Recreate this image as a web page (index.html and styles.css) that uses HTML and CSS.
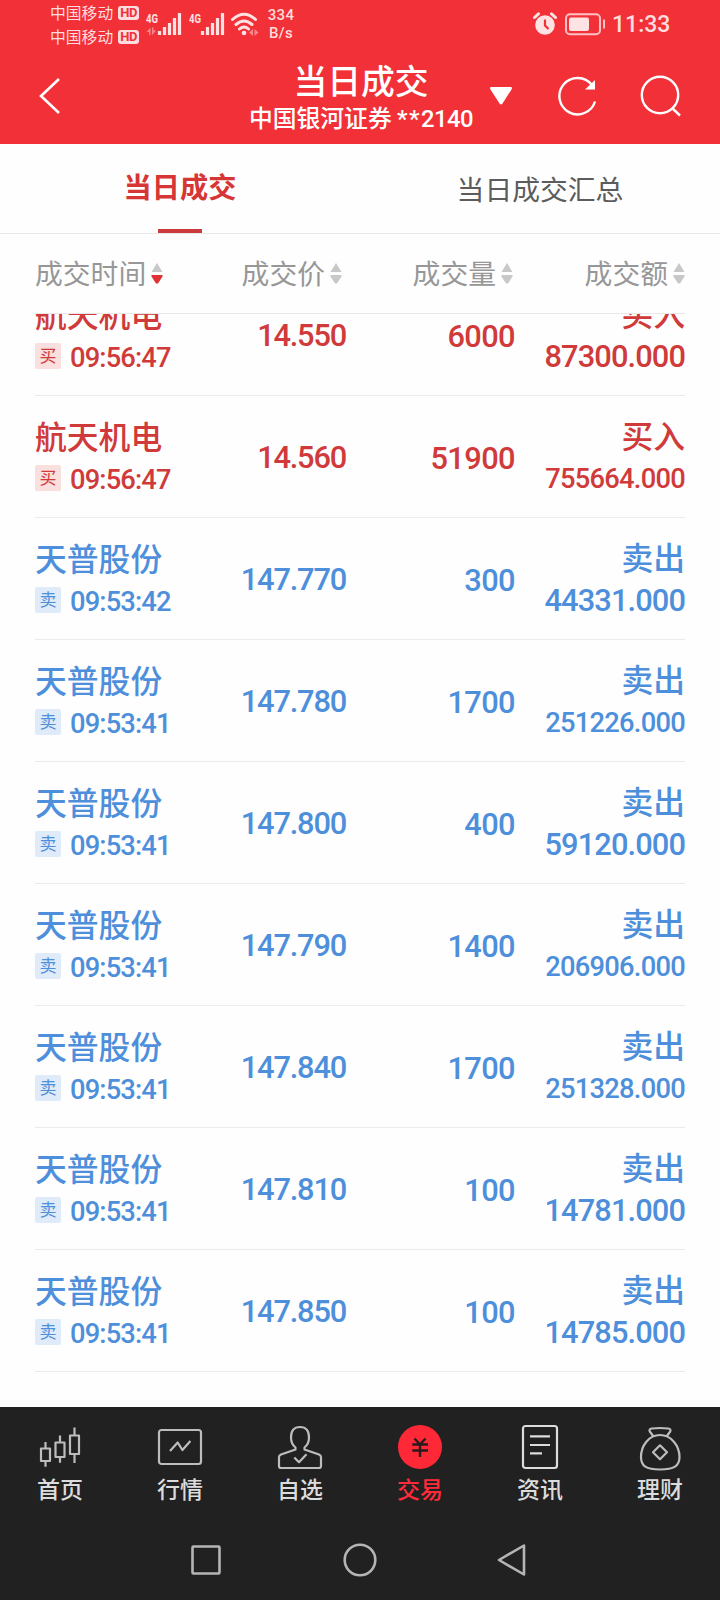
FILE: index.html
```html
<!DOCTYPE html>
<html lang="zh-CN">
<head>
    <meta charset="UTF-8">
    <meta name="viewport" content="width=device-width, initial-scale=1.0">
    <title>当日成交</title>
    <link rel="stylesheet" href="styles.css">
</head>
<body>
    <header class="top">
        <div class="status">
            <div class="carriers">
                <div class="carrier">中国移动<span class="hd">HD</span></div>
                <div class="carrier">中国移动<span class="hd">HD</span></div>
            </div>
            <svg class="signal" width="37" height="26" viewBox="0 0 37 26">
                <text x="0" y="13" class="net" textLength="12" lengthAdjust="spacingAndGlyphs">4G</text>
                <path class="faint" d="M4.500 25v-7.500l-4 4.500h2.500v3zM6 17.500v7.500l4-4.500h-2.500v-3z"/>
                <path class="bars" d="M13.500 25v-4M18.500 25v-8M23.500 25v-12M28.500 25v-17M33.500 25v-22"/>
            </svg>
            <svg class="signal second" width="37" height="26" viewBox="0 0 37 26">
                <text x="0" y="13" class="net" textLength="12" lengthAdjust="spacingAndGlyphs">4G</text>
                <path class="bars" d="M13.500 25v-4M18.500 25v-8M23.500 25v-12M28.500 25v-17M33.500 25v-22"/>
            </svg>
            <svg class="wifi" width="28" height="24" viewBox="0 0 28 24">
                <path class="arc" d="M1.500 7.500Q13 -3 24.500 7.500M5 12.500Q13 5.500 21 12.500M8.500 17Q13 13 17.500 17"/>
                <circle cx="13" cy="21" r="2.300"/>
                <path class="faint" d="M22 24v-7l-4 3.500zM23.500 17v7l4-3.500z"/>
            </svg>
            <div class="speed">334<br>B/s</div>
            <svg class="alarm" width="24" height="24" viewBox="0 0 24 24">
                <circle cx="12" cy="13" r="9.800"/>
                <path class="ears" d="M1.500 5.500L5.500 1.800M22.500 5.500L18.500 1.800"/>
                <path class="hands" d="M12 7.500v6l3.500 3.500"/>
            </svg>
            <svg class="battery" width="41" height="23" viewBox="0 0 41 23">
                <rect class="shell" x="1" y="1.200" width="34" height="20" rx="4"/>
                <rect x="4" y="4.500" width="20" height="13.500" rx="2"/>
                <path class="shell" d="M39 6.500v9"/>
            </svg>
            <div class="clock">11:33</div>
        </div>
        <div class="bar">
            <svg class="back" width="24" height="40" viewBox="0 0 24 40">
                <path d="M21 3L3 20l18 17"/>
            </svg>
            <div class="account">
                <h1>当日成交</h1>
                <p>中国银河证券 <span class="num"><span class="mask">**</span>2140</span></p>
            </div>
            <svg class="drop" width="22" height="18" viewBox="0 0 22 18">
                <path d="M1 0h20q1.500 0 .5 2.500L12.500 16.500q-1.500 2-3 0L.5 2.500Q-.5 0 1 0z"/>
            </svg>
            <svg class="tool refresh" width="40" height="40" viewBox="0 0 40 40">
                <path d="M37 25.500A18.200 18.200 0 1 1 34 9"/>
                <path class="head" d="M37 4v9.500h-10z"/>
            </svg>
            <svg class="tool search" width="42" height="42" viewBox="0 0 42 42">
                <circle cx="20" cy="20" r="18.200"/>
                <path d="M32 33l8 7.500"/>
            </svg>
        </div>
    </header>

    <nav class="tabs">
        <a class="tab active">当日成交</a>
        <a class="tab">当日成交汇总</a>
    </nav>

    <main>
        <div class="cols head-row">
            <div class="sort down">成交时间<svg width="12" height="22" viewBox="0 0 12 22"><path d="M6 0l5.500 9H.5z"/><path class="lower" d="M.5 12h11v1.500L7 20.500H5L.5 13.500z"/></svg></div>
            <div class="sort">成交价<svg width="12" height="22" viewBox="0 0 12 22"><path d="M6 0l5.500 9H.5z"/><path class="lower" d="M.5 12h11v1.500L7 20.500H5L.5 13.500z"/></svg></div>
            <div class="sort">成交量<svg width="12" height="22" viewBox="0 0 12 22"><path d="M6 0l5.500 9H.5z"/><path class="lower" d="M.5 12h11v1.500L7 20.500H5L.5 13.500z"/></svg></div>
            <div class="sort last">成交额<svg width="12" height="22" viewBox="0 0 12 22"><path d="M6 0l5.500 9H.5z"/><path class="lower" d="M.5 12h11v1.500L7 20.500H5L.5 13.500z"/></svg></div>
        </div>
        <!-- the first row is scrolled part way under the heading -->
        <div class="list">
            <div class="cols row buy">
                <div class="stock"><b>航天机电</b><div class="when"><i>买</i><span>09:56:47</span></div></div>
                <div class="price">14.550</div>
                <div class="qty">6000</div>
                <div class="amount"><b>买入</b><span>87300.000</span></div>
            </div>
            <div class="cols row buy">
                <div class="stock"><b>航天机电</b><div class="when"><i>买</i><span>09:56:47</span></div></div>
                <div class="price">14.560</div>
                <div class="qty">51900</div>
                <div class="amount"><b>买入</b><span class="long">755664.000</span></div>
            </div>
            <div class="cols row sell">
                <div class="stock"><b>天普股份</b><div class="when"><i>卖</i><span>09:53:42</span></div></div>
                <div class="price">147.770</div>
                <div class="qty">300</div>
                <div class="amount"><b>卖出</b><span>44331.000</span></div>
            </div>
            <div class="cols row sell">
                <div class="stock"><b>天普股份</b><div class="when"><i>卖</i><span>09:53:41</span></div></div>
                <div class="price">147.780</div>
                <div class="qty">1700</div>
                <div class="amount"><b>卖出</b><span class="long">251226.000</span></div>
            </div>
            <div class="cols row sell">
                <div class="stock"><b>天普股份</b><div class="when"><i>卖</i><span>09:53:41</span></div></div>
                <div class="price">147.800</div>
                <div class="qty">400</div>
                <div class="amount"><b>卖出</b><span>59120.000</span></div>
            </div>
            <div class="cols row sell">
                <div class="stock"><b>天普股份</b><div class="when"><i>卖</i><span>09:53:41</span></div></div>
                <div class="price">147.790</div>
                <div class="qty">1400</div>
                <div class="amount"><b>卖出</b><span class="long">206906.000</span></div>
            </div>
            <div class="cols row sell">
                <div class="stock"><b>天普股份</b><div class="when"><i>卖</i><span>09:53:41</span></div></div>
                <div class="price">147.840</div>
                <div class="qty">1700</div>
                <div class="amount"><b>卖出</b><span class="long">251328.000</span></div>
            </div>
            <div class="cols row sell">
                <div class="stock"><b>天普股份</b><div class="when"><i>卖</i><span>09:53:41</span></div></div>
                <div class="price">147.810</div>
                <div class="qty">100</div>
                <div class="amount"><b>卖出</b><span>14781.000</span></div>
            </div>
            <div class="cols row sell">
                <div class="stock"><b>天普股份</b><div class="when"><i>卖</i><span>09:53:41</span></div></div>
                <div class="price">147.850</div>
                <div class="qty">100</div>
                <div class="amount"><b>卖出</b><span>14785.000</span></div>
            </div>
        </div>
    </main>

    <footer>
        <nav class="menu">
            <a class="item">
                <svg width="48" height="48" viewBox="0 0 48 48">
                    <path d="M5 25.500h9v12.500h-9zM19.500 19.500h9v14.500h-9zM34 12.500h9v18.500h-9zM9.500 19V25M9.500 38.200v5.500M24 12.500v6.500M24 34.200v5.500M38.500 4.500V12M38.500 31.200V40"/>
                </svg>
                首页
            </a>
            <a class="item">
                <svg width="48" height="48" viewBox="0 0 48 48">
                    <rect x="3" y="7" width="42" height="34" rx="2.500"/>
                    <path d="M14 28l7.700-8.500 4.700 7.500 8-9"/>
                </svg>
                行情
            </a>
            <a class="item">
                <svg width="48" height="48" viewBox="0 0 48 48">
                    <path d="M19.500 24.500C16.500 22 15 19 15 14.500 15 8 18 4 24 4s9 4 9 10.500c0 4.500-1.500 7.500-4.500 10v2L43 31.500q2 .8 2 2.500v9q0 2-2 2H5q-2 0-2-2v-9q0-1.700 2-2.500l14.500-5z"/>
                    <path d="M18.300 34.500l4.700 4.700 7.500-8"/>
                </svg>
                自选
            </a>
            <a class="item current">
                <svg width="48" height="48" viewBox="0 0 48 48">
                    <circle cx="24" cy="24" r="22"/>
                    <path d="M18.500 15.500l5.500 6 5.500-6M16.300 21.500h15.700M16.300 27.500h15.700M24 21v13"/>
                </svg>
                交易
            </a>
            <a class="item bright">
                <svg width="48" height="48" viewBox="0 0 48 48">
                    <rect x="7" y="3" width="34" height="42" rx="2.500"/>
                    <path d="M14 13.300h20M14 22h20M14 30.300h12"/>
                </svg>
                资讯
            </a>
            <a class="item">
                <svg width="48" height="48" viewBox="0 0 48 48">
                    <path d="M17.500 13.500L13.800 8.500q-1.200-2.500 2-3 8.200-1 16.400 0 3.200.5 2 3l-3.700 5"/>
                    <path d="M24 12C13 12 5 22.500 5 34c0 9 5 12.500 19 12.500S43.500 43 43.500 34C43.500 22.500 35 12 24 12z"/>
                    <path d="M24 22.300l7 7-7 7-7-7z"/>
                </svg>
                理财
            </a>
        </nav>
        <div class="keys">
            <svg width="36" height="36" viewBox="0 0 36 36"><rect x="4.500" y="4.500" width="27" height="27" rx="1"/></svg>
            <svg width="36" height="36" viewBox="0 0 36 36"><circle cx="18" cy="18" r="15.300"/></svg>
            <svg width="36" height="36" viewBox="0 0 36 36"><path d="M28 3.500v29L3 18z"/></svg>
        </div>
    </footer>
</body>
</html>
```
FILE: styles.css
```css
* { box-sizing: border-box; }
body { margin: 0; width: 720px; height: 1600px; overflow: hidden; display: flex; flex-direction: column; background: #fefefe; font-family: "Noto Sans CJK SC", sans-serif; }
svg { display: block; flex: none; fill: none; }
b, i, h1 { font-style: normal; font-weight: 500; }

/* header */
.top { height: 144px; background: #f23037; color: #fff; }
.status { height: 49px; display: flex; align-items: flex-start; padding-left: 50px; color: #ffdcdd; }
.status svg { fill: #ffe3e4; }
.carriers { width: 96px; }
.carrier { height: 24px; display: flex; align-items: center; font-size: 15.8px; }
.hd { margin: 2px 0 0 5px; width: 21px; height: 14px; border-radius: 3px; background: #ffdcdd; color: #f23037; font: bold 13px/14px Roboto, sans-serif; text-align: center; letter-spacing: -0.3px; }
.signal { margin-top: 10px; }
.signal.second { margin-left: 6px; }
.net { font: bold 13px Roboto, sans-serif; }
.bars { stroke: #ffe3e4; stroke-width: 3.2; }
.faint { fill: #f9878b; }
.wifi { margin: 12px 0 0 5px; }
.arc { fill: none; stroke: #ffe3e4; stroke-width: 3; stroke-linecap: round; }
.speed { margin: 6px 0 0 6px; width: 32px; font: 500 15px/18px Roboto, sans-serif; text-align: center; letter-spacing: 0.3px; }
.alarm { margin: 12px 0 0 236px; }
.ears { stroke: #ffe3e4; stroke-width: 3; stroke-linecap: round; }
.status .hands { fill: none; stroke: #f23037; stroke-width: 2.2; }
.battery { margin: 13px 0 0 8px; }
.status .shell { fill: none; stroke: #ffc0c2; stroke-width: 2; }
.clock { margin: 11px 0 0 6px; font: 500 23px/28px Roboto, sans-serif; }
.bar { height: 95px; display: flex; align-items: flex-start; padding-left: 38px; }
.back { margin-top: 27px; stroke: #fff; stroke-width: 2.6; }
.account { margin-left: 180px; width: 238px; text-align: center; padding-top: 12px; }
.account h1 { margin: 0; font-size: 33.8px; line-height: 38px; }
.account p { margin: 3px 0 0; font-size: 23.8px; line-height: 30px; font-weight: 500; white-space: nowrap; }
.num { font-family: Roboto, sans-serif; letter-spacing: -0.5px; }
.mask { letter-spacing: 1.4px; }
.drop { margin: 38px 0 0 10px; fill: #fff; }
.tool { stroke: #fff; stroke-width: 2.4; }
.refresh { margin: 27px 0 0 46px; }
.refresh .head { fill: #fff; stroke: none; }
.search { margin: 26px 0 0 42px; }

/* tabs */
.tabs { height: 90px; display: flex; border-bottom: 1px solid #e8e8e8; }
.tab { width: 50%; display: flex; flex-direction: column; align-items: center; padding-top: 23px; font-size: 27.8px; line-height: 42px; color: #5c5c5c; }
.tab.active { color: #d63636; font-weight: 700; font-size: 28.2px; padding-top: 21px; }
.tab.active::after { content: ""; width: 44px; height: 4px; margin-top: 22px; background: #cb3b3d; }

/* table */
main { height: 1173px; padding: 0 35px; display: flex; flex-direction: column; }
.cols { display: grid; grid-template-columns: 150px 161px 169px 170px; }
.head-row { height: 80px; flex: none; border-bottom: 1px solid #e8e8e8; color: #979797; font-size: 27.8px; white-space: nowrap; }
.sort { display: flex; align-items: center; justify-content: flex-end; gap: 5px; padding-right: 4px; line-height: 76px; height: 76px; }
.sort:first-child { justify-content: flex-start; }
.sort:nth-child(3) { padding-right: 2px; }
.sort.last { padding-right: 0; }
.sort svg { fill: #c8c8c8; margin-top: 3px; }
.sort.down .lower { fill: #e03434; }
.list { overflow: hidden; flex: 1; }
.row { height: 122px; border-bottom: 1px solid #ebebeb; font-size: 31.8px; }
.row:first-child { margin-top: -40px; }
.row.buy { color: #d03a3a; }
.row.sell { color: #4e8fdb; }
.row b { display: block; line-height: 42px; }
.stock { padding-top: 18px; white-space: nowrap; }
.when { display: flex; align-items: center; gap: 9px; height: 42px; margin-top: 1px; font: 500 27.3px/42px Roboto, sans-serif; letter-spacing: -0.85px; }
.when span { padding-top: 3px; }
.when i { width: 26px; height: 26px; border-radius: 2px; background: #fadfdf; font: 17px/24px "Noto Sans CJK SC", sans-serif; letter-spacing: 0; text-align: center; }
.sell .when i { background: #e0ebf9; }
.price, .qty, .amount { text-align: right; }
.price, .qty, .amount span { font-family: Roboto, sans-serif; font-weight: 500; font-size: 30.8px; letter-spacing: -1.2px; }
.price { line-height: 124px; }
.qty { line-height: 126px; letter-spacing: -0.6px; }
.amount { padding-top: 17px; }
.amount span { display: block; margin-top: 3px; line-height: 42px; letter-spacing: -0.9px; }
.amount .long { font-size: 27.3px; letter-spacing: -0.75px; }

/* bottom */
footer { height: 193px; background: #212121; }
.menu { display: grid; grid-template-columns: repeat(6, 1fr); padding-top: 16px; }
.item { display: flex; flex-direction: column; align-items: center; font-size: 23px; font-weight: 500; line-height: 34px; color: #dcdcdc; }
.item svg { stroke: #bdbdbd; stroke-width: 2.2; stroke-linejoin: round; }
.bright svg { stroke: #dcdcdc; }
.current { color: #ff2b3b; }
.current circle { fill: #ff2837; stroke: none; }
.current path { stroke: #2a1a1c; stroke-width: 2.4; }
.keys { display: flex; justify-content: center; gap: 118px; margin-top: 37px; }
.keys svg { stroke: #b5b5b5; stroke-width: 2.6; stroke-linejoin: round; }
```
